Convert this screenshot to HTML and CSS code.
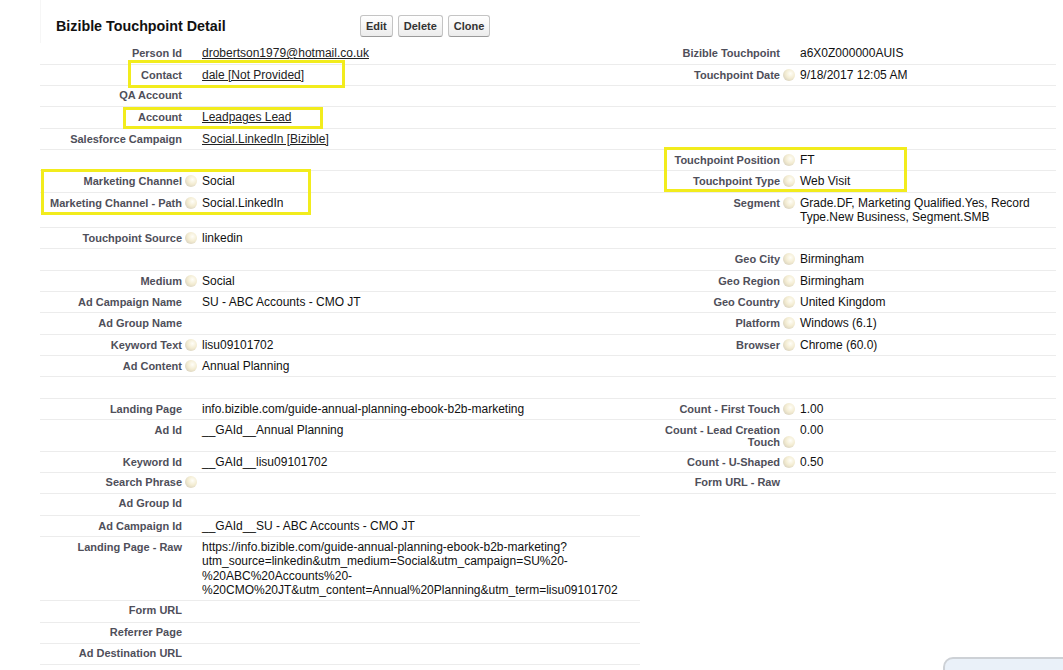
FILE: index.html
```html
<!DOCTYPE html>
<html lang="en">

<head>
  <meta charset="UTF-8">
  <meta name="viewport" content="width=device-width, initial-scale=1.0">
  <title>Bizible Touchpoint Detail</title>

  <link rel="stylesheet" href="styles.css">
</head>

<body>
  <div class="detail">
    <div class="pb-header">
      <h2>Bizible Touchpoint Detail</h2>
      <div class="buttons">
        <button>Edit</button>
        <button>Delete</button>
        <button>Clone</button>
      </div>
    </div>

    <table class="detail-list">
      <colgroup>
        <col class="label-1">
        <col class="data-1">
        <col class="label-2">
        <col class="data-2">
      </colgroup>
      <tr>
        <th>Person Id</th><td><a href="#">drobertson1979@hotmail.co.uk</a></td>
        <th>Bizible Touchpoint</th><td>a6X0Z000000AUIS</td>
      </tr>
      <tr>
        <th>Contact</th><td><a href="#">dale [Not Provided]</a></td>
        <th>Touchpoint Date<i class="orb"></i></th><td>9/18/2017 12:05 AM</td>
      </tr>
      <tr>
        <th>QA Account</th><td></td>
        <th></th><td></td>
      </tr>
      <tr>
        <th>Account</th><td><a href="#">Leadpages Lead</a></td>
        <th></th><td></td>
      </tr>
      <tr>
        <th>Salesforce Campaign</th><td><a href="#">Social.LinkedIn [Bizible]</a></td>
        <th></th><td></td>
      </tr>
      <tr>
        <th></th><td></td>
        <th>Touchpoint Position<i class="orb"></i></th><td>FT</td>
      </tr>
      <tr>
        <th>Marketing Channel<i class="orb"></i></th><td>Social</td>
        <th>Touchpoint Type<i class="orb"></i></th><td>Web Visit</td>
      </tr>
      <tr>
        <th>Marketing Channel - Path<i class="orb"></i></th><td>Social.LinkedIn</td>
        <th>Segment<i class="orb"></i></th><td>Grade.DF, Marketing Qualified.Yes, Record Type.New Business, Segment.SMB</td>
      </tr>
      <tr>
        <th>Touchpoint Source<i class="orb"></i></th><td>linkedin</td>
        <th></th><td></td>
      </tr>
      <tr>
        <th></th><td></td>
        <th>Geo City<i class="orb"></i></th><td>Birmingham</td>
      </tr>
      <tr>
        <th>Medium<i class="orb"></i></th><td>Social</td>
        <th>Geo Region<i class="orb"></i></th><td>Birmingham</td>
      </tr>
      <tr>
        <th>Ad Campaign Name</th><td>SU - ABC Accounts - CMO JT</td>
        <th>Geo Country<i class="orb"></i></th><td>United Kingdom</td>
      </tr>
      <tr>
        <th>Ad Group Name</th><td></td>
        <th>Platform<i class="orb"></i></th><td>Windows (6.1)</td>
      </tr>
      <tr>
        <th>Keyword Text<i class="orb"></i></th><td>lisu09101702</td>
        <th>Browser<i class="orb"></i></th><td>Chrome (60.0)</td>
      </tr>
      <tr>
        <th>Ad Content<i class="orb"></i></th><td>Annual Planning</td>
        <th></th><td></td>
      </tr>
      <tr>
        <th></th><td></td>
        <th></th><td></td>
      </tr>
      <tr>
        <th>Landing Page</th><td>info.bizible.com/guide-annual-planning-ebook-b2b-marketing</td>
        <th>Count - First Touch<i class="orb"></i></th><td>1.00</td>
      </tr>
      <tr>
        <th>Ad Id</th><td>__GAId__Annual Planning</td>
        <th>Count - Lead Creation Touch<i class="orb"></i></th><td>0.00</td>
      </tr>
      <tr>
        <th>Keyword Id</th><td>__GAId__lisu09101702</td>
        <th>Count - U-Shaped<i class="orb"></i></th><td>0.50</td>
      </tr>
      <tr>
        <th>Search Phrase<i class="orb"></i></th><td></td>
        <th>Form URL - Raw</th><td></td>
      </tr>
      <tr class="half">
        <th>Ad Group Id</th><td></td>
        <th></th><td></td>
      </tr>
      <tr class="half">
        <th>Ad Campaign Id</th><td>__GAId__SU - ABC Accounts - CMO JT</td>
        <th></th><td></td>
      </tr>
      <tr class="half">
        <th>Landing Page - Raw</th><td>https://info.bizible.com/guide-annual-planning-ebook-b2b-marketing?utm_source=linkedin&amp;utm_medium=Social&amp;utm_campaign=SU%20-%20ABC%20Accounts%20-%20CMO%20JT&amp;utm_content=Annual%20Planning&amp;utm_term=lisu09101702</td>
        <th></th><td></td>
      </tr>
      <tr class="half">
        <th>Form URL</th><td></td>
        <th></th><td></td>
      </tr>
      <tr class="half">
        <th>Referrer Page</th><td></td>
        <th></th><td></td>
      </tr>
      <tr class="half">
        <th>Ad Destination URL</th><td></td>
        <th></th><td></td>
      </tr>
    </table>

    <!-- marcas amarillas encima de los campos -->
    <span class="mark mark-contact"></span>
    <span class="mark mark-account"></span>
    <span class="mark mark-touchpoint"></span>
    <span class="mark mark-channel"></span>
  </div>

  <div class="widget"></div>
</body>

</html>
```

FILE: styles.css
```css
body {
    margin: 0;
    font-family: "Liberation Sans", Arial, sans-serif;
    background-color: #fff;
    color: #111;
    overflow: hidden;
}

.detail {
    position: relative;
    width: 1016px;
    margin-left: 40px;
}

.pb-header {
    display: flex;
    align-items: center;
    height: 34px;
    padding: 9px 0 0 15px;
    border-left: 1px solid #f6f6f6;

    h2 {
        margin: 0;
        width: 304px;
        font-size: 14.3px;
        font-weight: bold;
        color: #111;
    }
}

.buttons {
    display: flex;
    gap: 5px;

    button {
        height: 22px;
        padding: 0 5px;
        font-family: inherit;
        font-size: 11px;
        font-weight: bold;
        color: #333;
        background: linear-gradient(#fff, #ececec);
        border: 1px solid #c4c4c4;
        border-bottom-color: #9a9a9a;
        border-radius: 3px;
        cursor: pointer;
    }
}

.detail-list {
    width: 100%;
    table-layout: fixed;
    border-collapse: collapse;

    .label-1 { width: 162px; }
    .data-1 { width: 438px; }
    .label-2 { width: 160px; }

    tr {
        height: 21.3px;
    }

    th, td {
        box-sizing: border-box;
        vertical-align: baseline;
        padding: 3px 0;
        border-bottom: 1px solid #ececec;
    }

    th {
        padding-right: 20px;
        text-align: right;
        font-size: 11px;
        line-height: 12px;
        font-weight: bold;
        color: #4f4f5a;
    }

    td {
        font-size: 12px;
        line-height: 14.3px;
        color: #111;
        word-wrap: break-word;
    }

    a {
        color: #222;
        text-decoration: underline;
    }

    .half th:nth-of-type(2),
    .half td:nth-of-type(2) {
        border-bottom-color: transparent;
    }
}

.orb {
    display: inline-block;
    width: 12px;
    height: 12px;
    margin: 0 -15px 0 3px;
    vertical-align: -2px;
    border-radius: 50%;
    background: radial-gradient(circle at 62% 38%, #fffef8 0, #f3ecd2 45%, #d9d2bf 80%, #c9c4b8 100%);
}

.mark {
    position: absolute;
    border: 3px solid #f2ec1d;
    pointer-events: none;
}

.mark-contact {
    left: 88px;
    top: 60px;
    width: 211px;
    height: 22px;
}

.mark-account {
    left: 83px;
    top: 107px;
    width: 194px;
    height: 16px;
}

.mark-touchpoint {
    left: 624px;
    top: 147px;
    width: 237px;
    height: 39px;
}

.mark-channel {
    left: 1px;
    top: 169px;
    width: 264px;
    height: 40px;
}

.widget {
    position: fixed;
    left: 943px;
    top: 657px;
    width: 140px;
    height: 30px;
    background-color: #eaf1f9;
    border: 2px solid #cdd1d6;
    border-radius: 10px 0 0 0;
}
```
